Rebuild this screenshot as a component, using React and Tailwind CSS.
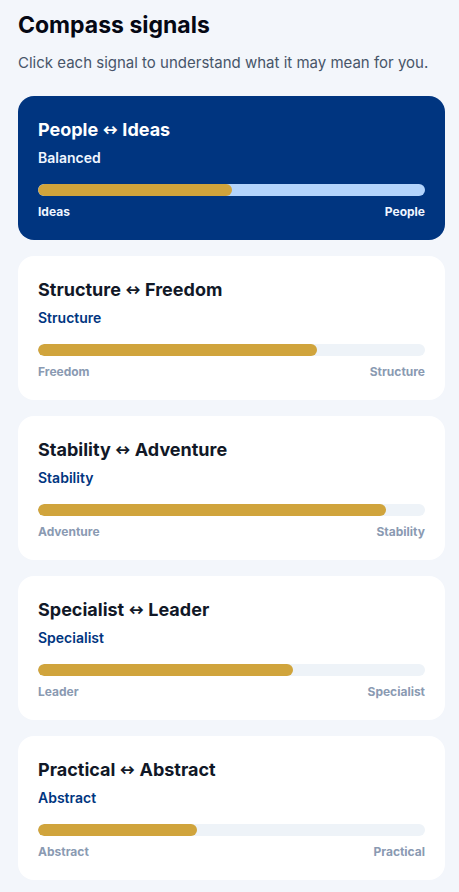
import React, { useState } from "react";

const signals = [
  { from: "People", to: "Ideas", result: "Balanced", value: 50, low: "Ideas", high: "People" },
  { from: "Structure", to: "Freedom", result: "Structure", value: 72, low: "Freedom", high: "Structure" },
  { from: "Stability", to: "Adventure", result: "Stability", value: 90, low: "Adventure", high: "Stability" },
  { from: "Specialist", to: "Leader", result: "Specialist", value: 66, low: "Leader", high: "Specialist" },
  { from: "Practical", to: "Abstract", result: "Abstract", value: 41, low: "Abstract", high: "Practical" },
];

function SignalCard({ signal, active, onSelect }) {
  return (
    <button
      type="button"
      aria-pressed={active}
      onClick={onSelect}
      className={`block w-full rounded-2xl p-5 text-left ${active ? "bg-[#003580] text-white" : "bg-white text-[#111827]"}`}
    >
      <span className="flex items-center gap-1 text-lg leading-7 font-bold">
        <span>{signal.from}</span>
        <span className="text-xs leading-4 font-black">↔</span>
        <span>{signal.to}</span>
      </span>
      <span className={`mt-1 block text-sm leading-5 font-semibold ${active ? "text-[#eff6ff]" : "text-[#003580]"}`}>
        {signal.result}
      </span>
      <span className={`mt-4 block h-3 overflow-hidden rounded-full ${active ? "bg-[#b3d4fc]" : "bg-[#eef3f8]"}`}>
        <span className="block h-full rounded-full bg-[#d0a43c]" style={{ width: `${signal.value}%` }} />
      </span>
      <span className={`mt-2 flex justify-between text-xs leading-4 font-bold ${active ? "text-[#eff6ff]" : "text-[#8a9ab2]"}`}>
        <span>{signal.low}</span>
        <span>{signal.high}</span>
      </span>
    </button>
  );
}

export default function App() {
  const [selected, setSelected] = useState(0);
  return (
    <main className="min-h-screen bg-[#f3f6fb] pt-[9px] pr-3.5 pb-3 pl-[18px] font-['Inter','Liberation_Sans',sans-serif]">
      <h2 className="text-[23px] leading-8 font-bold text-[#050814]">Compass signals</h2>
      <p className="mt-2 text-[15px] leading-7 text-[#475569]">
        Click each signal to understand what it may mean for you.
      </p>
      <div className="mt-[19px] grid gap-4">
        {signals.map((signal, i) => (
          <SignalCard key={signal.from} signal={signal} active={selected === i} onSelect={() => setSelected(i)} />
        ))}
      </div>
    </main>
  );
}
